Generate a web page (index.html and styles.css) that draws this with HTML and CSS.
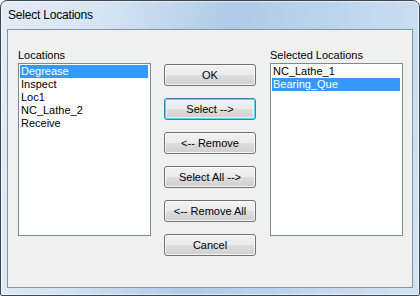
FILE: index.html
```html
<!DOCTYPE html>
<html lang="en">
<head>
    <meta charset="UTF-8">
    <title>Select Locations</title>
    <link rel="stylesheet" href="styles.css">
</head>
<body>
    <div class="window">
        <div class="titlebar">Select Locations</div>

        <div class="client">
            <div class="column">
                <div class="label">Locations</div>
                <div class="listbox">
                    <div class="item selected">Degrease</div>
                    <div class="item">Inspect</div>
                    <div class="item">Loc1</div>
                    <div class="item">NC_Lathe_2</div>
                    <div class="item">Receive</div>
                </div>
            </div>

            <div class="buttons">
                <button class="btn">OK</button>
                <button class="btn focused">Select --&gt;</button>
                <button class="btn">&lt;-- Remove</button>
                <button class="btn">Select All --&gt;</button>
                <button class="btn">&lt;-- Remove All</button>
                <button class="btn">Cancel</button>
            </div>

            <div class="column">
                <div class="label">Selected Locations</div>
                <div class="listbox">
                    <div class="item">NC_Lathe_1</div>
                    <div class="item selected">Bearing_Que</div>
                </div>
            </div>
        </div>
    </div>
</body>
</html>
```

FILE: styles.css
```css
/* general */
* {
    box-sizing: border-box;
    margin: 0;
    padding: 0;
}

body {
    width: 420px;
    height: 296px;
    font-family: 'Liberation Sans', Arial, sans-serif;
    font-size: 11px;
    color: #000;
    background: #fff;
}

/* window frame */
.window {
    width: 420px;
    height: 296px;
    border: 1px solid #3d4650;
    border-radius: 7px 7px 2px 2px;
    padding: 0 6px 7px 6px;
    display: flex;
    flex-direction: column;
    background:
        linear-gradient(100deg, #e4edf7 0%, #d6e4f3 22%, #aecbe7 50%, #bcd5ee 72%, #d3e3f3 100%);
    box-shadow: inset 0 0 0 1px rgba(255, 255, 255, 0.6);
}

.titlebar {
    height: 28px;
    line-height: 29px;
    padding-left: 1px;
    font-size: 12px;
    letter-spacing: -0.2px;
    color: #000;
}

.client {
    flex: 1;
    border: 1px solid #7f93ab;
    background: #f0f0f0;
    display: flex;
    align-items: flex-start;
    padding: 19px 0 0 10px;
}

/* list boxes */
.column {
    width: 133px;
}

.label {
    height: 14px;
    line-height: 13px;
}

.listbox {
    height: 173px;
    border: 1px solid #828790;
    background: #fff;
    padding: 1px 2px 1px 1px;
}

.item {
    height: 13px;
    line-height: 13px;
    padding-left: 1px;
    white-space: nowrap;
}

.item.selected {
    background: #3399ff;
    color: #fff;
}

/* buttons */
.buttons {
    display: flex;
    flex-direction: column;
    gap: 12px;
    margin: 15px 14px 0 13px;
}

.btn {
    width: 92px;
    height: 22px;
    border: 1px solid #707070;
    border-radius: 3px;
    font-family: 'Liberation Sans', Arial, sans-serif;
    font-size: 11px;
    color: #000;
    background: linear-gradient(#f2f2f2 0%, #ebebeb 50%, #dddddd 51%, #cfcfcf 100%);
    box-shadow: inset 0 0 0 1px rgba(255, 255, 255, 0.8);
}

.btn.focused {
    border-color: #3c7fb1;
    box-shadow: inset 0 0 0 1px #48d8fb, inset 0 0 0 2px rgba(255, 255, 255, 0.6);
}
```
